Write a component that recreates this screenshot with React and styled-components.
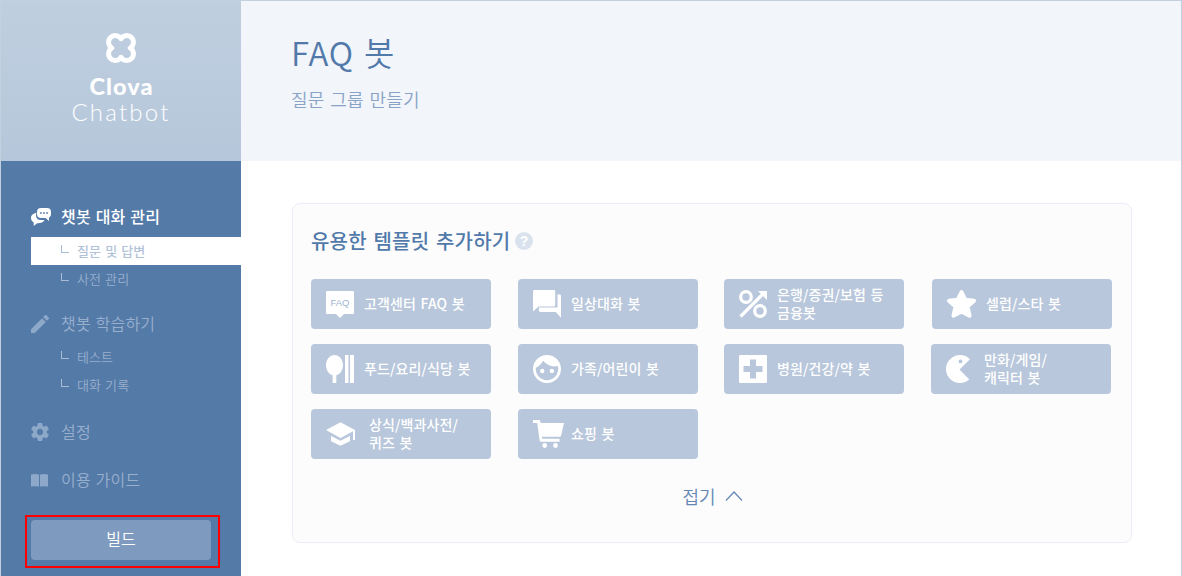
import React from "react";
import styled, { createGlobalStyle } from "styled-components";

const GlobalStyle = createGlobalStyle`
  * { box-sizing: border-box; }
  body {
    margin: 0;
    background: #fff;
    font-family: "Noto Sans CJK KR", "Noto Sans", sans-serif;
  }
`;

const Page = styled.div`
  display: flex;
  width: 1182px;
  height: 576px;
  overflow: hidden;
  border: 1px solid #c3d0e0;
  border-bottom: 0;
`;

const Sidebar = styled.aside`
  width: 240px;
  flex: none;
  background: #547aa8;
`;

const Brand = styled.div`
  height: 160px;
  padding-top: 31px;
  display: flex;
  flex-direction: column;
  align-items: center;
  color: #fff;
  font-family: Lato, sans-serif;
  background: linear-gradient(#bfcfe0, #b7c7db);
`;

const BrandName = styled.div`
  margin-top: 9px;
  font-size: 23.5px;
  line-height: 26px;
  font-weight: 900;
  letter-spacing: 1px;
  padding-left: 1px;
`;

const BrandProduct = styled.div`
  font-size: 24px;
  line-height: 26px;
  font-weight: 300;
  letter-spacing: 2.2px;
`;

const Nav = styled.nav`
  padding: 40px 0 0 30px;
`;

const NavItem = styled.div`
  display: flex;
  align-items: center;
  height: 32px;
  margin-top: ${(p) => p.$gap || 0}px;
  font-size: 16px;
  font-weight: ${(p) => (p.$active ? 500 : 350)};
  letter-spacing: 0.2px;
  word-spacing: 1px;
  color: ${(p) => (p.$active ? "#fff" : "#98afcd")};
  svg { color: ${(p) => (p.$active ? "#fff" : "#8ea8c9")}; }
`;

const ItemText = styled.span`
  padding-bottom: 2px;
`;

const IconSlot = styled.span`
  display: flex;
  width: 30px;
  flex: none;
`;

const SubItem = styled.div`
  display: flex;
  align-items: center;
  height: 28px;
  padding-left: 30px;
  font-size: 13px;
  font-weight: ${(p) => (p.$active ? 500 : 350)};
  letter-spacing: 0.1px;
  word-spacing: 1px;
  color: ${(p) => (p.$active ? "#b2c3d9" : "#98afcd")};
  background: ${(p) => (p.$active ? "#fff" : "transparent")};
  margin-top: ${(p) => p.$gap || 0}px;
`;

const Branch = styled.span`
  width: 8px;
  height: 8px;
  margin: 0 8px 4px 0;
  border-left: 1px solid #a9bcd5;
  border-bottom: 1px solid #a9bcd5;
`;

const BuildArea = styled.div`
  position: relative;
  width: 180px;
  margin-top: 24px;
`;

const BuildButton = styled.button`
  display: block;
  width: 180px;
  height: 40px;
  padding: 0 0 5px;
  border: 0;
  border-radius: 4px;
  background: #7f9abf;
  color: #fff;
  font: 350 16px "Noto Sans CJK KR", sans-serif;
`;

const Highlight = styled.div`
  position: absolute;
  left: -6px;
  top: -5px;
  width: 195px;
  height: 53px;
  border: 2px solid #f00;
`;

const Main = styled.main`
  flex: 1;
  background: #fff;
`;

const Header = styled.header`
  height: 160px;
  padding: 27px 0 0 50px;
  background: #f2f5f9;
`;

const Title = styled.h1`
  margin: 0;
  font-size: 33px;
  line-height: 48px;
  font-weight: 350;
  letter-spacing: 0.8px;
  word-spacing: 2px;
  color: #5179aa;
`;

const Subtitle = styled.p`
  margin: 10px 0 0;
  font-size: 18px;
  line-height: 26px;
  font-weight: 350;
  letter-spacing: 0.2px;
  word-spacing: 1.5px;
  color: #89a3c7;
`;

const Panel = styled.section`
  width: 840px;
  height: 340px;
  margin: 42px 0 0 51px;
  padding: 22px 0 0 18px;
  border: 1px solid #e9eef5;
  border-radius: 8px;
  background: #fcfcfc;
`;

const PanelHead = styled.div`
  display: flex;
  align-items: center;
  height: 30px;
`;

const PanelTitle = styled.h2`
  margin: 0;
  width: 204px;
  font-size: 20px;
  line-height: 30px;
  font-weight: 500;
  white-space: nowrap;
  letter-spacing: 0.2px;
  word-spacing: 2px;
  color: #5179aa;
`;

const Help = styled.span`
  width: 18px;
  height: 18px;
  border-radius: 50%;
  background: #dae3ed;
  color: #fff;
  font: 700 14px/18px "Liberation Sans", sans-serif;
  text-align: center;
`;

const Grid = styled.div`
  display: grid;
  grid-template-columns: 207px 206px 208px 180px;
  row-gap: 15px;
  margin-top: 23px;
`;

const Template = styled.div`
  display: flex;
  align-items: center;
  width: 180px;
  height: 50px;
  padding-left: 15px;
  margin-left: ${(p) => p.$shift || 0}px;
  border-radius: 4px;
  background: #b8c7db;
  color: #fff;
`;

const TemplateIcon = styled.span`
  display: flex;
  width: ${(p) => p.$slot || 38}px;
  flex: none;
`;

const TemplateLabel = styled.span`
  font-size: 14px;
  line-height: 18px;
  font-weight: 500;
  white-space: pre;
  word-spacing: 1.3px;
  letter-spacing: 0.1px;
  padding-bottom: ${(p) => (p.$lines > 1 ? 2 : 3)}px;
`;

const Fold = styled.div`
  display: flex;
  align-items: center;
  justify-content: center;
  gap: 9px;
  height: 26px;
  margin: 24px 17px 0 0;
  font-size: 18px;
  font-weight: 350;
  color: #6486b5;
`;

const Svg = ({ w, h, box, children }) => (
  <svg width={w} height={h} viewBox={box || `0 0 ${w} ${h}`} fill="currentColor">
    {children}
  </svg>
);

const Logo = () => (
  <svg width="32" height="32" viewBox="-16 -16 32 32" fill="none" stroke="#fff" strokeWidth="4.900" strokeLinejoin="round">
    <path d="M0-9.200A6.700 6.700 0 1 1 9.200 0A6.700 6.700 0 1 1 0 9.200A6.700 6.700 0 1 1-9.200 0A6.700 6.700 0 1 1 0-9.200Z" />
  </svg>
);

const ChatIcon = () => (
  <Svg w={20} h={18}>
    <path d="M5.5 4.8C2.300 5.300 0 7.400 0 10c0 1.800 1 3.300 2.600 4.300L2.800 18l3.300-2.700c3.200.200 6.300-.900 7.400-3.300H9.500C6.800 12 5 10 5 7.500 5 6.500 5.100 5.600 5.500 4.800z" />
    <path fillRule="evenodd" d="M10 0h6a4 4 0 0 1 4 4v2c0 1.700-.8 2.900-2 3.500V13l-3.300-3H10a4 4 0 0 1-4-4V4a4 4 0 0 1 4-4zM9 4.300v1.500h1.700V4.300zm3.100 0v1.500h1.700V4.300zm3.100 0v1.500h1.700V4.300z" />
  </Svg>
);

const PencilIcon = () => (
  <Svg w={18} h={18} box="3 3 18 18">
    <path d="M3 17.250V21h3.750L17.810 9.940l-3.750-3.750L3 17.250zM20.710 7.040c.39-.39.39-1.020 0-1.410l-2.340-2.340c-.39-.39-1.020-.39-1.410 0l-1.830 1.830 3.750 3.750 1.830-1.830z" />
  </Svg>
);

const GearIcon = () => (
  <Svg w={18} h={18} box="2 2 20 20">
    <path d="M19.430 12.980c.04-.32.07-.64.07-.98s-.03-.66-.07-.98l2.110-1.650c.19-.15.24-.42.12-.64l-2-3.460c-.12-.22-.39-.3-.61-.22l-2.490 1c-.52-.4-1.080-.73-1.690-.98l-.38-2.650C14.460 2.180 14.250 2 14 2h-4c-.25 0-.46.18-.49.42l-.38 2.650c-.61.25-1.170.59-1.690.98l-2.490-1c-.23-.09-.49 0-.61.22l-2 3.460c-.13.22-.07.49.12.64l2.110 1.650c-.04.32-.07.65-.07.98s.03.66.07.98l-2.110 1.650c-.19.15-.24.42-.12.64l2 3.460c.12.22.39.3.61.22l2.490-1c.52.4 1.080.73 1.690.98l.38 2.650c.03.24.24.42.49.42h4c.25 0 .46-.18.49-.42l.38-2.650c.61-.25 1.170-.59 1.690-.98l2.490 1c.23.09.49 0 .61-.22l2-3.460c.12-.22.07-.49-.12-.64l-2.110-1.650zM12 15.500c-1.930 0-3.500-1.570-3.500-3.500s1.570-3.500 3.500-3.500 3.500 1.570 3.500 3.500-1.570 3.500-3.500 3.500z" />
  </Svg>
);

const BookIcon = () => (
  <Svg w={17} h={13}>
    <path d="M0 .5Q5-.5 8 .8V12.500Q5 11.800 0 12.500zM9 .8Q12-.5 17 .5V12.500Q12 11.800 9 12.500z" />
  </Svg>
);

const FaqBox = styled.span`
  position: relative;
  display: block;
  width: 28px;
  height: 23px;
  margin-bottom: 4px;
  border-radius: 1px;
  background: #fff;
  color: #9fb4cf;
  font: 9.5px/23px "Liberation Sans", sans-serif;
  text-align: center;
  &::after {
    content: "";
    position: absolute;
    left: 10px;
    top: 23px;
    border: 4px solid transparent;
    border-top-color: #fff;
    border-bottom: 0;
  }
`;

const ForumIcon = () => (
  <Svg w={28} h={28} box="2 2 20 20">
    <path d="M21 5.200h-1.500V14.500H6.200v2.200c0 .55.45 1 1 1h11L22 21.800V6.200c0-.6-.4-1-1-1zM17.900 12.800V3c0-.55-.45-1-1-1H3c-.55 0-1 .45-1 1v14.300l4-3.500h10.900c.6 0 1-.4 1-1z" />
  </Svg>
);

const PercentIcon = () => (
  <svg width="28" height="28" viewBox="0 0 28 28" fill="none" stroke="#fff">
    <circle cx="7" cy="7" r="5.300" strokeWidth="3.200" />
    <circle cx="21" cy="21" r="5.300" strokeWidth="3.200" />
    <path d="M1.500 26.500L24 4" strokeWidth="3.200" />
    <path d="M19 1h9v9z" fill="#fff" stroke="none" />
  </svg>
);

const StarIcon = () => (
  <svg width="30" height="28" viewBox="0 0 30 28" fill="#fff" stroke="#fff" strokeWidth="4" strokeLinejoin="round">
    <path d="M14.500 2.200L18.300 9.700L27 10.800L20.600 16.600L22.500 25.700L14.500 21.500L6.500 25.700L8.400 16.600L2 10.800L10.700 9.700Z" />
  </svg>
);

const CutleryIcon = () => (
  <Svg w={28} h={28}>
    <path d="M8.500 0C13.200 0 17 4.600 17 10.200c0 4.800-2.900 9-6.700 10V28H6.600v-7.800C2.900 19.200 0 15 0 10.200 0 4.600 3.800 0 8.500 0zM19 0h3.500v28H19zM24 0h4v28h-4z" />
  </Svg>
);

const FaceIcon = () => (
  <Svg w={28} h={28} box="2 2 20 20">
    <circle cx="8.600" cy="13.400" r="1.550" />
    <circle cx="15.500" cy="13.400" r="1.550" />
    <path d="M12 2C6.480 2 2 6.480 2 12s4.480 10 10 10 10-4.480 10-10S17.520 2 12 2zm0 18c-4.410 0-8-3.590-8-8 0-.29.02-.58.05-.86 2.360-1.050 4.230-2.980 5.210-4.970C11.070 8.330 14.050 10.200 17.420 10.200c.78 0 1.530-.09 2.250-.26.21.71.33 1.270.33 2.060 0 4.410-3.590 8-8 8z" />
  </Svg>
);

const HospitalIcon = () => (
  <Svg w={28} h={28}>
    <path fillRule="evenodd" d="M1 0h26a1 1 0 0 1 1 1v26a1 1 0 0 1-1 1H1a1 1 0 0 1-1-1V1a1 1 0 0 1 1-1zM11 4.500v6.500H4.500v6h6.500v6.500h6v-6.500h6.500v-6h-6.500V4.500z" />
  </Svg>
);

const PacmanIcon = () => (
  <Svg w={25} h={28}>
    <path fillRule="evenodd" d="M24 4.300A14 14 0 1 0 23.300 24.500L13.500 14.500zM14.500 4.500a1.900 1.900 0 1 1 0 3.800a1.900 1.900 0 0 1 0-3.800z" />
  </Svg>
);

const SchoolIcon = () => (
  <Svg w={29} h={24} box="1 3 22 18">
    <path d="M4.800 13.500v4L12 21l7.200-3.500v-4L12 17.100zM12 3L1 9l11 6 9.500-5V16.500H23V9z" />
  </Svg>
);

const CartIcon = () => (
  <Svg w={31} h={28}>
    <path d="M0 0h6.700l1 3H31l-2.800 12.200c-.2 1-.8 1.600-1.700 1.600H8.800l.5 2h17.200v3H8.500c-1.200 0-1.700-.6-1.900-1.500L4.200 3H0z" />
    <circle cx="11.700" cy="25.500" r="2.400" />
    <circle cx="22.500" cy="25.500" r="2.400" />
  </Svg>
);

const templates = [
  { label: "고객센터 FAQ 봇", icon: <FaqBox>FAQ</FaqBox> },
  { label: "일상대화 봇", icon: <ForumIcon /> },
  { label: "은행/증권/보험 등\n금융봇", icon: <PercentIcon /> },
  { label: "셀럽/스타 봇", icon: <StarIcon />, slot: 39 },
  { label: "푸드/요리/식당 봇", icon: <CutleryIcon /> },
  { label: "가족/어린이 봇", icon: <FaceIcon /> },
  { label: "병원/건강/약 봇", icon: <HospitalIcon /> },
  { label: "만화/게임/\n캐릭터 봇", icon: <PacmanIcon />, shift: -1 },
  { label: "상식/백과사전/\n퀴즈 봇", icon: <SchoolIcon />, slot: 43 },
  { label: "쇼핑 봇", icon: <CartIcon /> },
];

export default function App() {
  return (
    <>
      <GlobalStyle />
      <Page>
        <Sidebar>
          <Brand>
            <Logo />
            <BrandName>Clova</BrandName>
            <BrandProduct>Chatbot</BrandProduct>
          </Brand>
          <Nav>
            <NavItem $active><IconSlot><ChatIcon /></IconSlot><ItemText>챗봇 대화 관리</ItemText></NavItem>
            <SubItem $active $gap={4}><Branch /><ItemText>질문 및 답변</ItemText></SubItem>
            <SubItem><Branch /><ItemText>사전 관리</ItemText></SubItem>
            <NavItem $gap={15}><IconSlot><PencilIcon /></IconSlot><ItemText>챗봇 학습하기</ItemText></NavItem>
            <SubItem $gap={3}><Branch /><ItemText>테스트</ItemText></SubItem>
            <SubItem><Branch /><ItemText>대화 기록</ItemText></SubItem>
            <NavItem $gap={17}><IconSlot><GearIcon /></IconSlot><ItemText>설정</ItemText></NavItem>
            <NavItem $gap={16}><IconSlot><BookIcon /></IconSlot><ItemText>이용 가이드</ItemText></NavItem>
            <BuildArea>
              <BuildButton>빌드</BuildButton>
              <Highlight />
            </BuildArea>
          </Nav>
        </Sidebar>
        <Main>
          <Header>
            <Title>FAQ 봇</Title>
            <Subtitle>질문 그룹 만들기</Subtitle>
          </Header>
          <Panel>
            <PanelHead>
              <PanelTitle>유용한 템플릿 추가하기</PanelTitle>
              <Help>?</Help>
            </PanelHead>
            <Grid>
              {templates.map((t) => (
                <Template key={t.label} $shift={t.shift}>
                  <TemplateIcon $slot={t.slot}>{t.icon}</TemplateIcon>
                  <TemplateLabel $lines={t.label.split("\n").length}>{t.label}</TemplateLabel>
                </Template>
              ))}
            </Grid>
            <Fold>
              접기
              <svg width="18" height="10" viewBox="0 0 18 10" fill="none" stroke="currentColor" strokeWidth="1.200">
                <path d="M1 9.500L9 1L17 9.500" />
              </svg>
            </Fold>
          </Panel>
        </Main>
      </Page>
    </>
  );
}
